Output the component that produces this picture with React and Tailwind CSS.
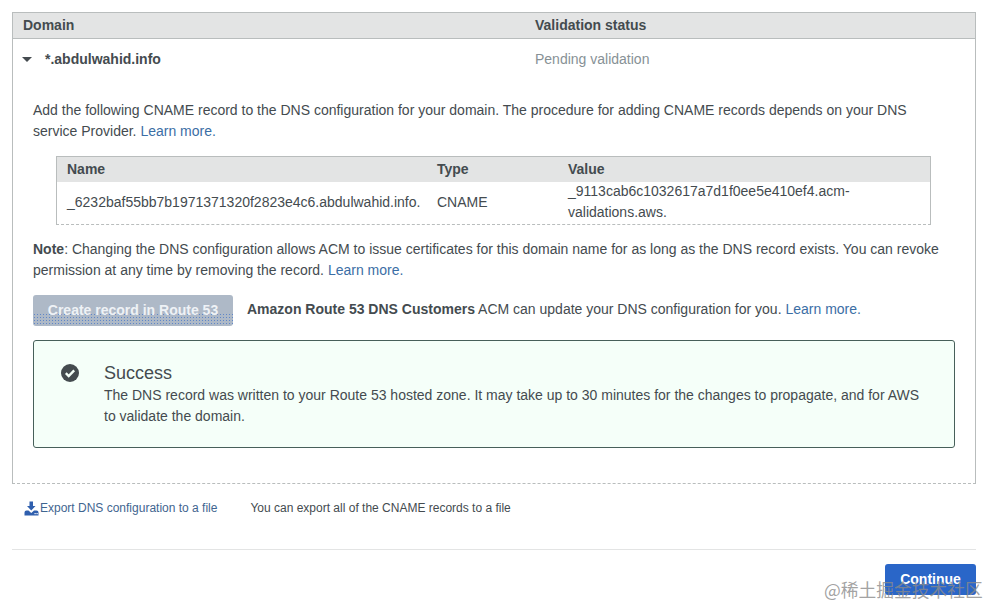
import React from 'react';

const font = { fontFamily: '"Liberation Sans", Arial, sans-serif' };

const CheckCircle = () => (
  <svg viewBox="0 0 18 18" className="w-[18px] h-[18px]">
    <circle cx="9" cy="9" r="9" fill="#444b4f" />
    <path d="M4.8 9.2 L7.7 12 L13.2 6.4" fill="none" stroke="#f4fff8" strokeWidth="2.4" />
  </svg>
);

const ExportIcon = () => (
  <svg viewBox="0 0 15 15" className="w-[15px] h-[15px]">
    <path d="M5.5 0.5 H9 V5 H11.5 L7.25 9.5 L3 5 H5.5 Z" fill="#2f5fae" />
    <path d="M0.5 14.5 V11.5 Q0.5 9.5 2.5 9.5 H4.5 L7.25 12 L10 9.5 H12.5 Q14.5 9.5 14.5 11.5 V14.5 Z" fill="#2f5fae" />
    <rect x="10.5" y="12" width="1.2" height="1.2" fill="#fff" />
    <rect x="12.5" y="12" width="1.2" height="1.2" fill="#fff" />
  </svg>
);

const LearnMore = () => <a className="text-[#3b6ea5]">Learn more.</a>;

export default function App() {
  return (
    <div style={font} className="relative w-[990px] h-[606px] overflow-hidden bg-white text-[14px] leading-[21px] text-[#444b4f] pt-3 px-3">
      {/* domain panel */}
      <div className="w-[964px] h-[472px] border border-[#b9bdbd] [border-bottom-style:dashed]">
        <div className="flex h-[26px] items-center bg-[#e3e4e4] border-b border-[#b9bdbd] font-bold">
          <div className="w-[522px] pl-[10px]">Domain</div>
          <div>Validation status</div>
        </div>
        <div className="flex h-[40px] items-center">
          <div className="w-[522px] flex items-center pl-[9px] font-bold">
            <span className="w-0 h-0 border-x-[5px] border-x-transparent border-t-[5px] border-t-[#444b4f] mr-[13px]"></span>
            *.abdulwahid.info
          </div>
          <div className="text-[#879196]">Pending validation</div>
        </div>

        <div className="pl-5 pr-5">
          <p className="mt-[21px] w-[890px]">
            Add the following CNAME record to the DNS configuration for your domain. The procedure for adding CNAME records depends on your DNS service Provider. <LearnMore />
          </p>

          {/* cname table */}
          <div className="ml-[23px] mt-[14px] w-[875px] h-[69px] border border-[#b9bdbd] [border-bottom-style:dashed]">
            <div className="flex h-[25px] items-center bg-[#e3e4e4] font-bold">
              <div className="w-[380px] pl-[10px]">Name</div>
              <div className="w-[131px]">Type</div>
              <div>Value</div>
            </div>
            <div className="flex h-[40px] items-center">
              <div className="w-[380px] pl-[10px] whitespace-nowrap">_6232baf55bb7b1971371320f2823e4c6.abdulwahid.info.</div>
              <div className="w-[131px]">CNAME</div>
              <div className="w-[300px]">_9113cab6c1032617a7d1f0ee5e410ef4.acm-<br />validations.aws.</div>
            </div>
          </div>

          <p className="mt-[14px] w-[915px]">
            <span className="font-bold">Note</span>: Changing the DNS configuration allows ACM to issue certificates for this domain name for as long as the DNS record exists. You can revoke permission at any time by removing the record. <LearnMore />
          </p>

          <div className="flex items-center mt-[14px]">
            <button className="relative w-[200px] h-[31px] rounded-[3px] overflow-hidden bg-[#aeb9c7] text-[#eef2f6] font-bold">
              <span className="absolute left-0 right-0 bottom-0 h-[13px] bg-[radial-gradient(#5f86c8_1px,transparent_1px)] bg-[length:3px_3px]"></span>
              <span className="relative">Create record in Route 53</span>
            </button>
            <p className="ml-[14px] mb-[2px]">
              <span className="font-bold">Amazon Route 53 DNS Customers</span> ACM can update your DNS configuration for you. <LearnMore />
            </p>
          </div>

          {/* success alert */}
          <div className="flex mt-[14px] w-[922px] h-[108px] rounded-[3px] border border-[#47605a] bg-[#f5fff9] pt-[21px]">
            <div className="w-[70px] pl-[27px] pt-[2px]"><CheckCircle /></div>
            <div className="w-[825px]">
              <div className="text-[18px] leading-[22px] mb-px">Success</div>
              <p>The DNS record was written to your Route 53 hosted zone. It may take up to 30 minutes for the changes to propagate, and for AWS to validate the domain.</p>
            </div>
          </div>
        </div>
      </div>

      {/* export row */}
      <div className="flex items-center h-[18px] mt-[15px] pl-3 text-[12px] leading-[18px]">
        <ExportIcon />
        <a className="ml-px text-[#3f6590]">Export DNS configuration to a file</a>
        <span className="ml-[33px]">You can export all of the CNAME records to a file</span>
      </div>

      <div className="mt-[32px] w-[964px] border-t border-[#e3e4e4]"></div>

      <div className="flex justify-end w-[964px] mt-[14px]">
        <button className="w-[91px] h-[31px] rounded-[3px] bg-[#2a66c8] text-white font-bold">Continue</button>
      </div>

      {/* watermark */}
      <div className="absolute left-[824px] top-[578px] text-[17.75px] leading-[22px] whitespace-nowrap text-[#8a8a8a]/80" style={{ fontFamily: '"Noto Sans CJK SC", sans-serif' }}>
        @稀土掘金技术社区
      </div>
    </div>
  );
}
